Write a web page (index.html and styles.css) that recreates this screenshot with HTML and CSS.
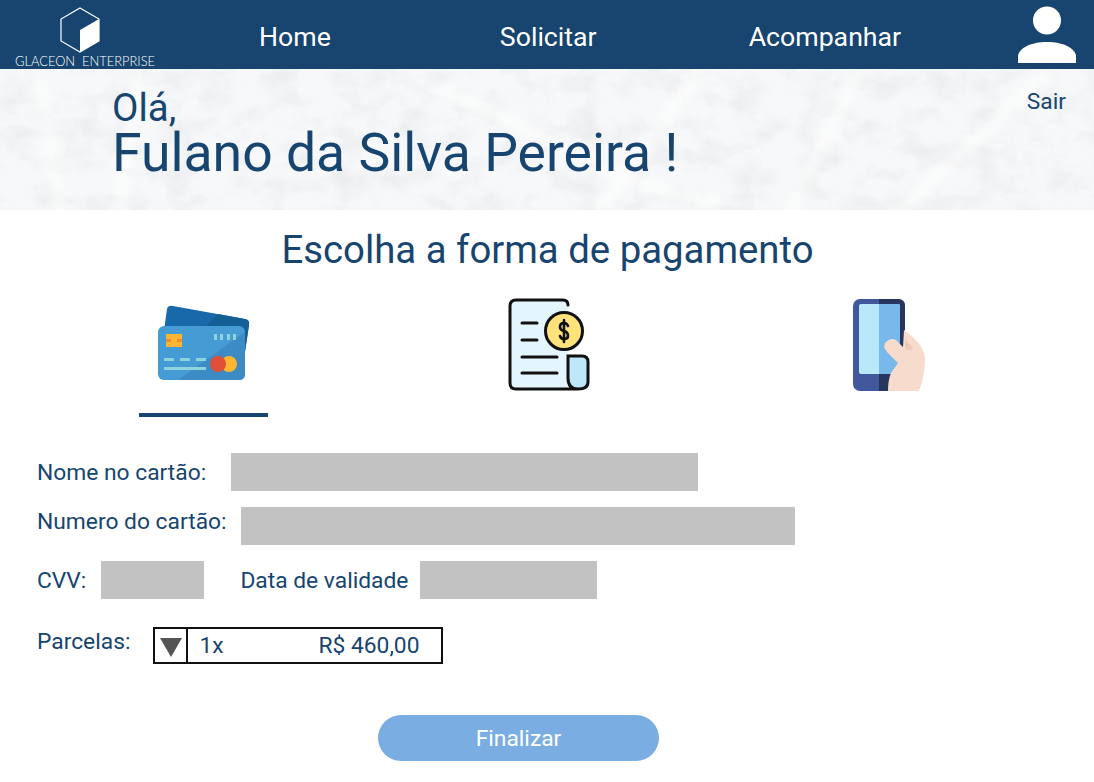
FILE: index.html
```html
<!DOCTYPE html>
<html lang="pt-BR">
<head>
  <meta charset="UTF-8" />
  <meta name="viewport" content="width=device-width, initial-scale=1" />
  <title>Glaceon Enterprise - Pagamento</title>
  <link rel="stylesheet" href="styles.css">
</head>
<body>
  <!-- Header -->
  <header class="topbar">
    <div class="logo">
      <svg class="logo-mark" width="40" height="46" viewBox="0 0 40 46">
        <path d="M20 1 L39 12 L39 34 L20 45 L1 34 L1 12 Z" fill="none" stroke="#fff" stroke-width="1.2"/>
        <path d="M20 23 L39 12 L39 34 L20 45 Z" fill="#fff"/>
      </svg>
      <span class="logo-text">GLACEON&nbsp; ENTERPRISE</span>
    </div>
    <nav class="nav">
      <a class="nav-home">Home</a>
      <a class="nav-request">Solicitar</a>
      <a class="nav-track">Acompanhar</a>
    </nav>
    <svg class="avatar" width="58" height="58" viewBox="0 0 58 58">
      <circle cx="29" cy="14.5" r="14" fill="#fff"/>
      <path d="M0 57 L0 50 C1 42 13 36 29 36 C45 36 57 42 58 50 L58 57 Z" fill="#fff"/>
    </svg>
  </header>

  <!-- Greeting -->
  <section class="banner">
    <svg class="frost" width="1094" height="141">
      <filter id="frostNoise" x="0" y="0" width="100%" height="100%">
        <feTurbulence type="fractalNoise" baseFrequency="0.03 0.04" numOctaves="6" seed="23"/>
        <feColorMatrix type="matrix" values="0 0 0 0 0.84  0 0 0 0 0.85  0 0 0 0 0.86  2.4 0 0 0 -1.02"/>
      </filter>
      <filter id="frostBlur">
        <feGaussianBlur stdDeviation="5"/>
      </filter>
      <rect width="1094" height="141" fill="#f7f8f9"/>
      <rect width="1094" height="141" filter="url(#frostNoise)"/>
      <g filter="url(#frostBlur)" fill="none" stroke="#fff" stroke-width="9" opacity="0.6">
        <path d="M140 0 L120 141"/>
        <path d="M40 10 L60 141"/>
        <path d="M440 20 C560 70 600 110 720 135"/>
        <path d="M700 0 L600 141"/>
        <path d="M860 0 L790 141"/>
        <path d="M900 141 L1050 0"/>
      </g>
    </svg>
    <div class="greeting">
      <p class="hello">Olá,</p>
      <p class="name">Fulano da Silva Pereira !</p>
    </div>
    <a class="logout">Sair</a>
  </section>

  <main>
    <h1 class="title">Escolha a forma de pagamento</h1>

    <!-- Payment options -->
    <div class="methods">
      <div class="method method-card active">
        <svg width="94" height="76" viewBox="0 0 94 76">
          <path d="M9 4 Q10 0 15 1 L87 14 Q92 15 91 20 L85 60 L4 40 Z" fill="#1769aa"/>
          <path d="M60 9 L87 14 Q92 15 91 20 L85 60 L40 30 Z" fill="#155f97"/>
          <rect x="0" y="21" width="87" height="54" rx="6" fill="#459bd3"/>
          <path d="M20 75 L87 27 L87 69 Q87 75 81 75 Z" fill="#3d8bc5"/>
          <rect x="8" y="29" width="16" height="13" fill="#fdb62f"/>
          <rect x="8" y="34" width="5" height="3" fill="#f58634"/>
          <rect x="19" y="34" width="5" height="3" fill="#f58634"/>
          <rect x="56" y="29" width="3" height="6" fill="#8fd3dc"/>
          <rect x="62" y="29" width="3" height="6" fill="#8fd3dc"/>
          <rect x="69" y="29" width="3" height="6" fill="#8fd3dc"/>
          <rect x="75" y="29" width="3" height="6" fill="#8fd3dc"/>
          <rect x="6" y="53" width="10" height="3" fill="#8fd3dc"/>
          <rect x="22" y="53" width="10" height="3" fill="#8fd3dc"/>
          <rect x="38" y="53" width="10" height="3" fill="#8fd3dc"/>
          <rect x="6" y="62" width="42" height="3" fill="#8fd3dc"/>
          <circle cx="71" cy="59" r="8" fill="#fdb62f"/>
          <circle cx="60" cy="59" r="8" fill="#e04f3a"/>
        </svg>
      </div>
      <div class="method method-bill">
        <svg width="82" height="94" viewBox="0 0 82 94">
          <path d="M3 6 Q3 2 7 2 L56 2 Q60 2 60 6 L60 80 Q60 91 70 91 L9 91 Q3 91 3 85 Z" fill="#e4f6fd"/>
          <path d="M60 58 L80 58 L80 84 Q80 91 70 91 Q60 91 60 80 Z" fill="#bde8fa"/>
          <path d="M60 7 Q60 2 55 2 L8 2 Q2 2 2 8 L2 85 Q2 91 8 91 L70 91 Q80 91 80 84 L80 64 Q80 58 74 58 L60 58 L60 80 Q60 91 70 91" fill="none" stroke="#111" stroke-width="3" stroke-linecap="round"/>
          <path d="M14 25 H29 M14 42 H29 M14 59 H49 M14 75 H49" stroke="#111" stroke-width="3" stroke-linecap="round"/>
          <circle cx="56" cy="33" r="18.5" fill="#ffe27a" stroke="#111" stroke-width="3"/>
          <path d="M60 28 Q59 25 56 25 Q52 25 52 29 Q52 32 56 33 Q60 34 60 38 Q60 41 56 41 Q53 41 52 38 M56 22 V44" fill="none" stroke="#111" stroke-width="2.6" stroke-linecap="round"/>
        </svg>
      </div>
      <div class="method method-phone">
        <svg width="72" height="94" viewBox="0 0 72 94">
          <rect x="0" y="1" width="52" height="92" rx="7" fill="#41589c"/>
          <path d="M26 1 H45 Q52 1 52 8 V86 Q52 93 45 93 H26 Z" fill="#26365f"/>
          <rect x="6" y="6" width="41" height="70" rx="2" fill="#bae8fb"/>
          <path d="M26 6 H45 Q47 6 47 8 V74 Q47 76 45 76 H26 Z" fill="#78b8ea"/>
          <path d="M51 32 Q70 45 72 60 Q72 78 66 93 L35 93 Q35 82 38 75 L45 65 L34 54 Q29 48 33 44 Q38 39 43 42 L50 49 Z" fill="#f7dccd"/>
          <path d="M52 41 L60 50 Q58 54 54 52 L52 50 Z" fill="#efc9b8"/>
        </svg>
      </div>
    </div>

    <!-- Card form -->
    <form class="form">
      <div class="row row-name">
        <label for="cardName">Nome no cartão:</label>
        <input class="field field-name" type="text" id="cardName" />
      </div>
      <div class="row row-number">
        <label for="cardNumber">Numero do cartão:</label>
        <input class="field field-number" type="text" id="cardNumber" />
      </div>
      <div class="row row-cvv">
        <label for="cvv">CVV:</label>
        <input class="field field-cvv" type="text" id="cvv" />
        <label class="label-date" for="validity">Data de validade</label>
        <input class="field field-date" type="text" id="validity" />
      </div>
      <div class="row row-installments">
        <label>Parcelas:</label>
        <div class="select">
          <span class="select-arrow"></span>
          <span class="select-count">1x</span>
          <span class="select-price">R$ 460,00</span>
        </div>
      </div>
      <button class="submit" type="button">Finalizar</button>
    </form>
  </main>
</body>
</html>
```

FILE: styles.css
```css
* {
  box-sizing: border-box;
}
html, body {
  height: 100%;
}
body {
  margin: 0;
  font-family: Roboto, "Liberation Sans", sans-serif;
  color: #17456f;
  background: #fff;
  overflow: hidden;
}
p {
  margin: 0;
}

/* header */
.topbar {
  display: flex;
  align-items: center;
  height: 69px;
  background: #17456f;
  color: #fff;
}
.logo {
  display: flex;
  flex-direction: column;
  align-items: center;
  width: 140px;
  margin-left: 15px;
  padding-top: 6px;
}
.logo-mark {
  display: block;
  margin-right: 10px;
}
.logo-text {
  margin-top: 1px;
  font-family: Lato, sans-serif;
  font-size: 12.9px;
  line-height: 14px;
  font-weight: 300;
  white-space: nowrap;
}
.nav {
  display: flex;
  flex: 1;
  padding-top: 4px;
  font-size: 26.7px;
}
.nav-home {
  margin-left: 104px;
}
.nav-request {
  margin-left: 169px;
}
.nav-track {
  margin-left: 152px;
}
.avatar {
  margin-right: 18px;
  margin-top: 1px;
}

/* greeting */
.banner {
  position: relative;
  display: flex;
  justify-content: space-between;
  height: 141px;
  overflow: hidden;
}
.frost {
  position: absolute;
  top: 0;
  left: 0;
}
.greeting {
  position: relative;
  padding: 19px 0 0 112px;
}
.hello {
  font-size: 38.4px;
  line-height: 40px;
}
.name {
  font-size: 53.5px;
  line-height: 50px;
}
.logout {
  position: relative;
  margin: 19px 28px 0 0;
  font-size: 22.8px;
  line-height: 28px;
}

/* payment */
.title {
  margin: 18px 0 0;
  padding-left: 1px;
  font-size: 38.35px;
  line-height: 44px;
  font-weight: 400;
  text-align: center;
}
.methods {
  position: relative;
  height: 119px;
  margin-top: 26px;
}
.method {
  position: absolute;
  top: 0;
  display: flex;
}
.method-card {
  left: 139px;
  width: 129px;
  height: 119px;
  padding: 7px 0 0 19px;
  border-bottom: 4px solid #17456f;
}
.method-bill {
  left: 508px;
}
.method-phone {
  left: 853px;
}

/* form */
.form {
  padding: 36px 0 0 37px;
}
.row {
  display: flex;
  align-items: center;
  font-size: 22.8px;
  height: 38px;
}
.row-number {
  margin-top: 16px;
}
.row-cvv {
  margin-top: 16px;
}
.row-installments {
  margin-top: 28px;
  height: 37px;
}
.row-number label {
  margin-bottom: 10px;
}
.row-installments label {
  margin-bottom: 9px;
}
.field {
  height: 38px;
  padding: 0;
  border: 0;
  border-radius: 0;
  background: #c2c2c2;
}
.field-name {
  width: 467px;
  margin-left: 25px;
}
.field-number {
  width: 554px;
  margin-left: 14px;
}
.field-cvv {
  width: 103px;
  margin-left: 15px;
}
.label-date {
  margin-left: 36px;
}
.field-date {
  width: 177px;
  margin-left: 12px;
}
.select {
  display: flex;
  align-items: center;
  width: 290px;
  height: 37px;
  margin-left: 23px;
  border: 2px solid #111;
}
.select-arrow {
  width: 0;
  height: 0;
  margin: 4px 0 0 5px;
  border-left: 11px solid transparent;
  border-right: 11px solid transparent;
  border-top: 19px solid #555;
}
.select-count {
  width: 132px;
  height: 33px;
  margin-left: 4px;
  padding-left: 11px;
  border-left: 2px solid #111;
  line-height: 33px;
}
.select-price {
  white-space: nowrap;
}
.submit {
  display: block;
  width: 281px;
  height: 46px;
  margin: 51px 0 0 341px;
  border: 0;
  border-radius: 23px;
  background: #7aaee3;
  color: #fff;
  font-family: inherit;
  font-size: 22.8px;
}
```
